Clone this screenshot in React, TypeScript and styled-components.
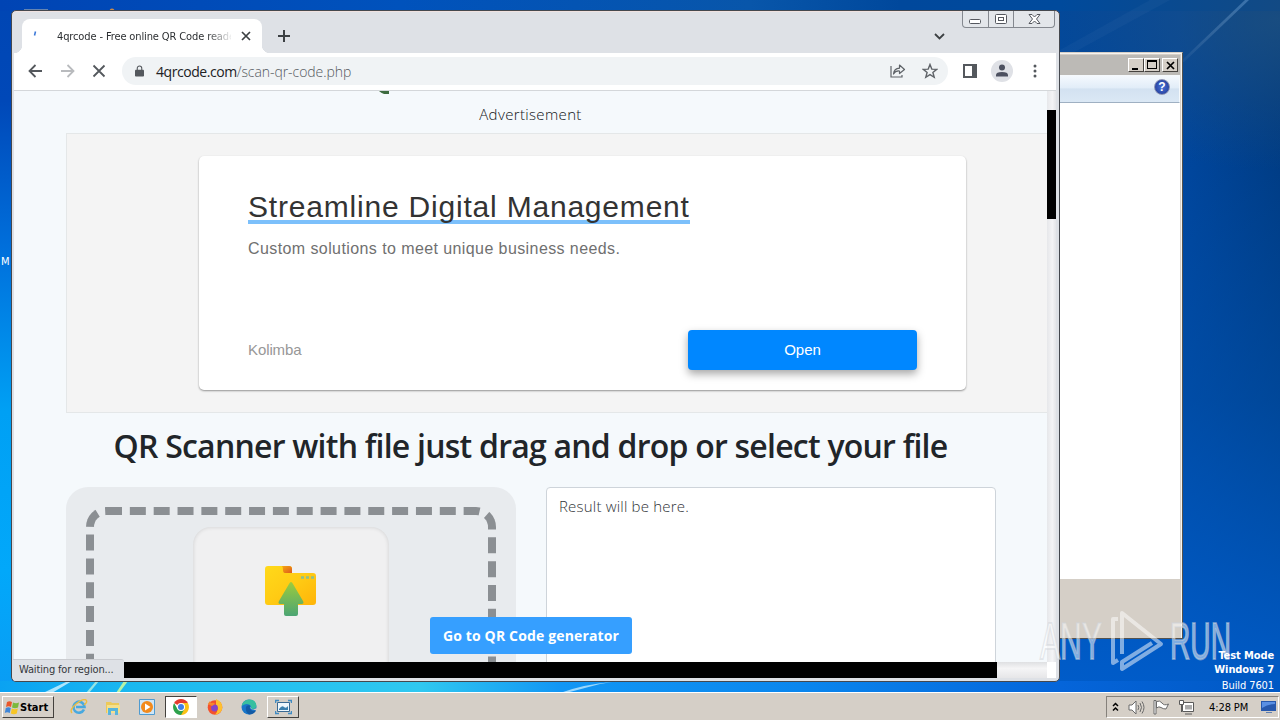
import styled, { createGlobalStyle } from 'styled-components';

const font = {
	ui: '"DejaVu Sans Condensed", "DejaVu Sans", sans-serif',
	page: '"Open Sans", "Noto Sans", sans-serif',
	ad: '"Liberation Sans", Arial, sans-serif',
};

const App = () => {
	return (
		<Desktop>
			<GlobalStyle />
			<Wallpaper />
			<Shortcut>M</Shortcut>
			<Explorer />
			<Browser />
			<Watermark />
			<BuildInfo>
				<b>Test Mode</b>
				<b>Windows 7</b>
				<span>Build 7601</span>
			</BuildInfo>
			<Taskbar />
		</Desktop>
	);
};

export default App;

const Wallpaper = () => (
	<WallpaperSvg viewBox='0 0 1280 720'>
		<defs>
			<linearGradient id='ray' x1='0' y1='1' x2='1' y2='0'>
				<stop offset='0' stopColor='#fff' stopOpacity='.03' />
				<stop offset='1' stopColor='#9fd0ff' stopOpacity='.3' />
			</linearGradient>
		</defs>
		<path d='M1180 62 1245 0h4L1184 62Z' fill='url(#ray)' />
		<path d='M1060 50 1150 0h20L1060 60Z' fill='#fff' opacity='.03' />
		<path d='M43 693 68 681h4L52 693Z' fill='#d5f4ff' opacity='.8' />
		<path d='M86 693 96 681h3L89 693Z' fill='#b8f0e0' opacity='.8' />
		<path d='M116 693 124 681h4L119 693Z' fill='#c8f8a0' opacity='.9' />
		<path d='M560 693Q585 684 612 682L600 684 566 693Z' fill='#d5f4ff' opacity='.7' />
		<path d='M24 9h24v2H24Z' fill='#8fa0b0' opacity='.7' />
		<circle cx='112' cy='11' r='2.5' fill='#c98a4a' />
	</WallpaperSvg>
);

const Explorer = () => (
	<ExplorerWindow>
		<ExplorerTitle>
			<ClassicButton>
				<svg width='10' height='10'>
					<path d='M1 8h6v2H1Z' />
				</svg>
			</ClassicButton>
			<ClassicButton>
				<svg width='10' height='10'>
					<path d='M0 0h10v9H0ZM1 2v6h8V2Z' fillRule='evenodd' />
				</svg>
			</ClassicButton>
			<ClassicButton $gap>
				<svg width='9' height='9' stroke='#000' strokeWidth='1.7'>
					<path d='m1 1 7 7M8 1 1 8' />
				</svg>
			</ClassicButton>
		</ExplorerTitle>
		<ExplorerToolbar>
			<HelpBadge>?</HelpBadge>
		</ExplorerToolbar>
		<ExplorerBody />
	</ExplorerWindow>
);

const Browser = () => (
	<BrowserWindow>
		<TabStrip>
			<Tab>
				<svg width='16' height='16'>
					<path d='M6.500 7.500 7.500 3.500' stroke='#3b78d8' strokeWidth='1.6' fill='none' />
				</svg>
				<TabTitle>4qrcode - Free online QR Code reader</TabTitle>
				<svg width='10' height='10' stroke='#3c4043' strokeWidth='1.7'>
					<path d='m1 1 8 8M9 1 1 9' />
				</svg>
			</Tab>
			<NewTab width='12' height='12'>
				<path d='M6 0v12M0 6h12' stroke='#3c4043' strokeWidth='2' />
			</NewTab>
			<TabSearch width='11' height='7'>
				<path d='m1 1 4.500 4.500L10 1' stroke='#3c4043' strokeWidth='1.8' fill='none' />
			</TabSearch>
			<WindowControls>
				<Control $width={25}>
					<svg width='13' height='16' fill='#fff' stroke='#55585f'>
						<rect x='.5' y='8.500' width='11' height='4' rx='1' />
					</svg>
				</Control>
				<Control $width={25}>
					<svg width='13' height='16' fill='#fff' stroke='#55585f'>
						<rect x='.5' y='3.500' width='11' height='9' rx='1' />
						<rect x='3.500' y='6.500' width='5' height='3' />
					</svg>
				</Control>
				<Control $width={41}>
					<svg width='13' height='16' fill='#fff' stroke='#55585f'>
						<path d='M1 3.500h3L6.500 6 9 3.500h3L8.500 8l3.500 4.500H9L6.500 10 4 12.500H1L4.500 8Z' />
					</svg>
				</Control>
			</WindowControls>
		</TabStrip>

		<Toolbar>
			<NavIcons width='96' height='16' fill='none' strokeWidth='1.8'>
				<path d='M16 8H4M9.500 2 3.500 8 9.500 14' stroke='#54585d' />
				<path d='M35 8h12M41.500 2 47.500 8 41.500 14' stroke='#b9bbbe' />
				<path d='m67.500 2.500 11 11M78.500 2.500l-11 11' stroke='#54585d' />
			</NavIcons>
			<Omnibox>
				<svg width='9' height='12' viewBox='0 0 10 12'>
					<path d='M1 4.500h8q1 0 1 1V11q0 1-1 1H1q-1 0-1-1V5.500q0-1 1-1Z' fill='#54585d' />
					<path d='M2.500 5V3a2.500 2.500 0 0 1 5 0v2' stroke='#54585d' strokeWidth='1.2' fill='none' />
				</svg>
				<Url>
					<b>4qrcode.com</b>/scan-qr-code.php
				</Url>
				<svg width='16' height='14' fill='none' stroke='#5f6368' strokeWidth='1.2'>
					<path d='M1 2v11h11v-2' />
					<path d='M3.500 10Q4 4.500 9.500 4.200V1L14.500 5.500 9.500 9.500V7Q5.500 6.500 3.500 10Z' strokeLinejoin='round' />
				</svg>
				<Star width='16' height='16' viewBox='0 0 16 16' fill='none' stroke='#5f6368' strokeWidth='1.4'>
					<path d='m8 1.500 1.800 4.600 4.900.3-3.800 3.100 1.300 4.800L8 11.600l-4.200 2.700 1.300-4.800L1.300 6.400l4.900-.3Z' />
				</Star>
			</Omnibox>
			<SidePanel width='14' height='14'>
				<path d='M0 0h14v14H0ZM2 2v10h7V2Z' fill='#54585d' fillRule='evenodd' />
			</SidePanel>
			<Avatar>
				<svg width='14' height='14' fill='#4d5160'>
					<circle cx='7' cy='3.500' r='3' />
					<path d='M1 12.500V11q0-3 6-3t6 3v1.500Z' />
				</svg>
			</Avatar>
			<svg width='4' height='14' fill='#54585d'>
				<circle cx='2' cy='2' r='1.500' />
				<circle cx='2' cy='7' r='1.500' />
				<circle cx='2' cy='12' r='1.500' />
			</svg>
		</Toolbar>

		<Viewport>
			<Page>
				<LogoTip width='12' height='3'>
					<path d='M0 0h10v3H5Q2 2 0 0Z' fill='#3d6b3f' />
				</LogoTip>
				<AdLabel>Advertisement</AdLabel>
				<AdSlot>
					<AdCard>
						<AdTitle>Streamline Digital Management</AdTitle>
						<AdText>Custom solutions to meet unique business needs.</AdText>
						<AdFooter>
							<Advertiser>Kolimba</Advertiser>
							<AdButton>Open</AdButton>
						</AdFooter>
					</AdCard>
				</AdSlot>
				<Heading>QR Scanner with file just drag and drop or select your file</Heading>
				<Columns>
					<DropPanel>
						<DropZone>
							<UploadTile>
								<FolderIcon />
							</UploadTile>
						</DropZone>
					</DropPanel>
					<ResultBox>Result will be here.</ResultBox>
				</Columns>
			</Page>
			<VerticalTrack>
				<VerticalThumb />
			</VerticalTrack>
		</Viewport>
		<BottomTrack>
			<BottomThumb />
		</BottomTrack>
		<GeneratorButton>Go to QR Code generator</GeneratorButton>
		<StatusBubble>Waiting for region...</StatusBubble>
	</BrowserWindow>
);

const FolderIcon = () => (
	<svg width='52' height='51' viewBox='0 0 52 51'>
		<defs>
			<linearGradient id='folder' x1='0' y1='0' x2='1' y2='1'>
				<stop offset='0' stopColor='#ffd91a' />
				<stop offset='.5' stopColor='#ffcb14' />
				<stop offset='1' stopColor='#ffb409' />
			</linearGradient>
			<linearGradient id='arrow' x1='0' y1='0' x2='0' y2='1'>
				<stop offset='0' stopColor='#9ccc3c' />
				<stop offset='1' stopColor='#4ca574' />
			</linearGradient>
			<linearGradient id='fold' x1='0' y1='0' x2='1' y2='1'>
				<stop offset='0' stopColor='#f6a712' />
				<stop offset='1' stopColor='#dc5a1c' />
			</linearGradient>
		</defs>
		<path d='M3 0h21q3 0 3 3v4h21q3 0 3 3v26q0 3-3 3H3q-3 0-3-3V3q0-3 3-3Z' fill='url(#folder)' />
		<path d='M17 0h7q3 0 3 3v4h-7q-2 0-2-3Q18 1 17 0Z' fill='url(#fold)' />
		<path d='M36 11.500h3M41 11.500h3M46 11.500h3' stroke='#8fc08a' strokeWidth='2.400' />
		<path d='M26 16q1 0 2 2l10 17q1.500 3-1.500 3h-3.500v10q0 2-2 2H21q-2 0-2-2V38h-3.500q-3 0-1.500-3L24 18q1-2 2-2Z' fill='url(#arrow)' />
	</svg>
);

const Watermark = () => (
	<WatermarkSvg width='200' height='70' fill='none' stroke='#fff' strokeOpacity='.5' strokeWidth='4'>
		<g fill='#fff' fillOpacity='.5' stroke='#d0d4d9' strokeOpacity='.5' strokeWidth='1.800' fontFamily='"Liberation Sans"' fontSize='51'>
			<text x='4' y='54' textLength='62' lengthAdjust='spacingAndGlyphs'>
				ANY
			</text>
			<text x='134' y='54' textLength='61' lengthAdjust='spacingAndGlyphs'>
				RUN
			</text>
		</g>
		<path d='M86 49V8L125 39 86 64V57L116 38' strokeLinejoin='round' />
		<path d='M82 14h-5V58l5-3' strokeLinejoin='round' />
	</WatermarkSvg>
);

const Taskbar = () => (
	<Bar>
		<StartButton>
			<svg width='16' height='15' viewBox='0 0 16 15'>
				<path d='M3 2Q5.500.5 8 2L7 7Q4.500 5.500 2 7Z' fill='#e9562a' />
				<path d='M9 2.500Q12 4 15 2.500L14 7.500Q11 9 8 7.500Z' fill='#7cb93c' />
				<path d='M1.800 8Q4.500 6.500 6.800 8L5.800 13Q3 11.500.8 13Z' fill='#3f86d8' />
				<path d='M7.800 8.500Q10.800 10 13.800 8.500L12.800 13.500Q9.800 15 6.800 13.500Z' fill='#f7c524' />
			</svg>
			Start
		</StartButton>
		<Launcher $left={9}>
			<svg width='18' height='16' viewBox='0 0 18 16' fill='none'>
				<path d='M14 10.500A5.500 5.500 0 1 1 14.500 8H6' stroke='#48a9df' strokeWidth='2.600' />
				<path d='M2 14Q-1 11 6 5T16 1Q18 3 14 6' stroke='#eebd3b' strokeWidth='1.400' />
			</svg>
		</Launcher>
		<Launcher>
			<svg width='16' height='15' viewBox='0 0 16 15'>
				<path d='M1 2h5l1 1h7v10H1Z' fill='#ecc95a' />
				<path d='M2 5h13v8H2Z' fill='#f5e08c' />
				<path d='M3 15V8h10v7h-3v-4H6v4Z' fill='#58b5dc' />
			</svg>
		</Launcher>
		<Launcher>
			<svg width='16' height='16'>
				<path d='M.5.5h15v15H.5Z' fill='#cfe6f7' stroke='#4f9bd0' />
				<circle cx='8' cy='8' r='6' fill='#f28a1c' />
				<path d='M6 4.500 11.500 8 6 11.500Z' fill='#fff' />
			</svg>
		</Launcher>
		<Launcher $state='active'>
			<svg width='16' height='16' viewBox='0 0 16 16'>
				<path d='M8 8 1.100 4A8 8 0 0 1 14.900 4Z' fill='#e33b2e' />
				<path d='M8 8V4h6.900A8 8 0 0 1 8 16Z' fill='#fbc116' />
				<path d='M8 8 4.500 10 1.100 4A8 8 0 0 0 8 16l3.500-6Z' fill='#2da14c' />
				<circle cx='8' cy='8' r='4' fill='#fff' />
				<circle cx='8' cy='8' r='3' fill='#3f7fe8' />
			</svg>
		</Launcher>
		<Launcher>
			<svg width='16' height='16' viewBox='0 0 16 16'>
				<circle cx='8' cy='8.500' r='7.300' fill='#f4512c' />
				<path d='M9 0q7 3 6.300 9.500Q14 15 8 15.800 13 10 9 6Z' fill='#ffc02e' />
				<circle cx='7.500' cy='9' r='3.400' fill='#8446c9' />
				<path d='M.8 5 3 2l1 2q3-1 4 1L5 7Z' fill='#f8862c' />
			</svg>
		</Launcher>
		<Launcher>
			<svg width='16' height='16' viewBox='0 0 16 16'>
				<circle cx='8' cy='8' r='7.500' fill='#1976c9' />
				<path d='M.6 7Q2 .5 8.500.5T15.500 7Q15 10.500 10 10q1-3-2-4.500T.6 7Z' fill='#38bfa0' />
				<path d='M5 8q1-2.500 4-1.500Q8 9 10 11q2 1.500 5 .5-2 4-7 4Q4 13 5 8Z' fill='#125aa5' />
				<path d='M9 7.500q0 3 5 3.500h1.500V9q-3 2-5 .8Z' fill='#d4cec6' />
			</svg>
		</Launcher>
		<Launcher $state='raised'>
			<svg width='17' height='16' viewBox='0 0 17 16'>
				<path d='M2.500 3.500h12v9h-12Z' fill='#eef7fd' stroke='#3a6a94' />
				<path d='M4 10q3-4 5-2t4-1v4H4Z' fill='#3b7fae' />
				<path d='M.5 4V1.500H4M13 1.500h3.500V4M.5 12v2.500H4M13 14.500h3.500V12' stroke='#3f8ac2' fill='none' strokeWidth='1.500' />
			</svg>
		</Launcher>
		<Tray>
			<svg width='8' height='10' fill='none' stroke='#000' strokeWidth='1.500'>
				<path d='M1 4 3.500 1.500 6 4M1 8.500 3.500 6 6 8.500' />
			</svg>
			<svg width='17' height='15' fill='#fff' stroke='#6a6a6a'>
				<path d='M1 5h3l4-4v13L4 10H1Z' />
				<path d='M10 5q1.500 2.500 0 5M12 3q3 4.500 0 9M14 1.500q4 6 0 12' fill='none' />
			</svg>
			<svg width='17' height='16' fill='#fff' stroke='#6a6a6a'>
				<path d='M1 1.500h2V15H1ZM3.500 2.500Q7 1 9 4t6.500 1L13 10Q10 10 8 8.500T3.500 9Z' />
			</svg>
			<svg width='17' height='16' fill='#fff' stroke='#5a5a5a'>
				<path d='M4.500 3.500h11v9h-11ZM7 15h7' />
				<path d='M7 6h7v4.500H7Z' fill='#aaa' stroke='none' />
				<path d='M1.500 1.500h4v4h-4ZM3.500 5.500V13' />
			</svg>
			<Clock>4:28 PM</Clock>
			<svg width='16' height='14'>
				<path d='M0 1h15v10H0Z' fill='#2859ad' />
				<path d='M1 2h13v2Q7 4 1 8Z' fill='#5b90e3' />
				<path d='M5 12h6v1H5Z' fill='#5f7fb0' />
			</svg>
		</Tray>
	</Bar>
);

const GlobalStyle = createGlobalStyle`
	* {
		box-sizing: border-box;
	}

	body {
		margin: 0;
		overflow: hidden;
	}

	svg {
		display: block;
		flex: none;
	}
`;

const Desktop = styled.div`
	position: relative;
	display: flex;
	flex-direction: column;
	justify-content: flex-end;
	width: 1280px;
	height: 720px;
	overflow: hidden;
	white-space: nowrap;
	font-family: ${font.ui};
	background:
		linear-gradient(90deg, #0aa2f2 0, #1ab8f0 130px, #30c8f0 420px, #1296f4 560px, #0a86ee 800px, #0565da 1060px, #0058c4 1280px)
			0 681px / 100% 12px no-repeat,
		linear-gradient(180deg, #0046b4 0, #0048b8 90px, #0070dc 240px, #00a0f4 400px, #02a8fa 560px, #0a9cf4 681px) 0 11px / 12px 670px
			no-repeat,
		linear-gradient(90deg, #0044b4 0, #0052bc 400px, #0856aa 750px, #00489c 900px, #004a9c 1060px, #124a84 1280px) 0 0 / 100%
			11px no-repeat,
		radial-gradient(260px 150px at 1280px 20px, rgba(35, 84, 128, 0.7), transparent),
		linear-gradient(180deg, transparent 100px, rgba(0, 84, 178, 0.5) 400px, rgba(0, 96, 210, 0.85) 690px),
		linear-gradient(90deg, #00479c 1059px, #00459c 1180px, #003a80 1280px);
`;

const WallpaperSvg = styled.svg`
	position: absolute;
	inset: 0;
`;

const Shortcut = styled.span`
	position: absolute;
	left: 1px;
	top: 255px;
	color: #fff;
	font-size: 11px;
`;

const ExplorerWindow = styled.section`
	position: absolute;
	left: 1040px;
	top: 52px;
	width: 143px;
	height: 587px;
	padding: 2px;
	display: flex;
	flex-direction: column;
	background: #d5cfc7;
	border: 1px solid #55524d;
	border-top-color: #d5cfc7;
	box-shadow: inset -1px 1px #f6f4f0;
`;

const ExplorerTitle = styled.header`
	height: 20px;
	display: flex;
	align-items: center;
	justify-content: flex-end;
	padding-right: 2px;
	background: #bcbab6;
`;

const ClassicButton = styled.span<{ $gap?: boolean }>`
	width: 16px;
	height: 14px;
	margin-left: ${({ $gap }) => ($gap ? 2 : 0)}px;
	display: flex;
	align-items: center;
	justify-content: center;
	background: #d5cfc7;
	border: 1px solid;
	border-color: #fff #45423e #45423e #fff;
`;

const ExplorerToolbar = styled.div`
	height: 28px;
	display: flex;
	align-items: flex-start;
	justify-content: flex-end;
	padding: 3px 9px 0;
	background: linear-gradient(#f4f9fe, #e2edf8 45%, #d3e2f1 50%, #dbe8f5);
	border: 1px solid #f5f9fc;
	border-bottom-color: #9fb0c2;
`;

const HelpBadge = styled.span`
	width: 16px;
	height: 16px;
	border: 1px solid #8c93b4;
	border-radius: 50%;
	background: radial-gradient(#4a72d8, #1d3590);
	color: #fff;
	font: bold 12px/14px ${font.ad};
	text-align: center;
`;

const ExplorerBody = styled.div`
	height: 476px;
	background: #fff;
`;

const BrowserWindow = styled.main`
	position: absolute;
	left: 11px;
	top: 10px;
	width: 1049px;
	height: 672px;
	padding: 0 3px 3px 2px;
	display: flex;
	flex-direction: column;
	background: #dee1e6;
	border: 1px solid #45484e;
	border-radius: 5px;
	box-shadow: inset 0 1px #f0e2e0;
	overflow: hidden;
`;

const TabStrip = styled.header`
	height: 42px;
	display: flex;
	align-items: center;
`;

const Tab = styled.div`
	position: relative;
	align-self: flex-end;
	width: 240px;
	height: 34px;
	margin-left: 8px;
	padding: 0 11px 0 6px;
	display: flex;
	align-items: center;
	background: #fff;
	border-radius: 8px 8px 0 0;

	&::before,
	&::after {
		content: '';
		position: absolute;
		bottom: 0;
		width: 8px;
		height: 8px;
	}

	&::before {
		left: -8px;
		background: radial-gradient(circle at 0 0, transparent 8px, #fff 8.5px);
	}

	&::after {
		right: -8px;
		background: radial-gradient(circle at 100% 0, transparent 8px, #fff 8.5px);
	}
`;

const TabTitle = styled.span`
	flex: 1;
	margin: 0 10px 0 13px;
	overflow: hidden;
	color: #2c2f32;
	font-size: 11px;
	letter-spacing: -0.12px;
	mask-image: linear-gradient(90deg, #000 150px, transparent 176px);
`;

const NewTab = styled.svg`
	margin: 8px 0 0 16px;
`;

const TabSearch = styled.svg`
	margin: 8px 17px 0 auto;
`;

const WindowControls = styled.div`
	align-self: flex-start;
	display: flex;
	height: 17px;
	margin-right: 1px;
	border: 1px solid #84888f;
	border-top: none;
	border-radius: 0 0 4px 4px;
	background: #e3e6ea;
`;

const Control = styled.span<{ $width: number }>`
	width: ${({ $width }) => $width}px;
	display: flex;
	justify-content: center;

	& + & {
		border-left: 1px solid #84888f;
	}
`;

const Toolbar = styled.div`
	height: 38px;
	display: flex;
	align-items: center;
	padding: 0 19px 2px 12px;
	background: #fff;
	border-bottom: 1px solid #d4d7da;
`;

const NavIcons = styled.svg`
	margin-top: 1px;
`;

const Omnibox = styled.div`
	flex: 1;
	height: 28px;
	display: flex;
	align-items: center;
	padding: 0 10px 0 13px;
	background: #f0f3f5;
	border-radius: 14px;
`;

const Url = styled.span`
	flex: 1;
	margin: 2px 0 0 12px;
	color: #55595e;
	font: 300 14px ${font.page};
	letter-spacing: -0.06px;

	b {
		color: #202124;
		font-weight: 400;
		letter-spacing: -0.45px;
	}
`;

const Star = styled.svg`
	margin-left: 16px;
`;

const SidePanel = styled.svg`
	margin-left: 15px;
`;

const Avatar = styled.span`
	width: 22px;
	height: 22px;
	margin: 0 20px 0 14px;
	display: flex;
	align-items: center;
	justify-content: center;
	background: #dfe1e6;
	border-radius: 50%;
`;

const Viewport = styled.div`
	flex: 1;
	min-height: 0;
	display: flex;
`;

const Page = styled.div`
	width: 1033px;
	display: flex;
	flex-direction: column;
	overflow: hidden;
	background: #f5f9fc;
	font-family: ${font.page};
`;

const LogoTip = styled.svg`
	margin-left: 365px;
`;

const AdLabel = styled.p`
	flex: none;
	height: 39px;
	margin: 0;
	padding-top: 8px;
	color: #101418;
	font-size: 15px;
	font-weight: 300;
	line-height: 24px;
	letter-spacing: 0.35px;
	text-align: center;
`;

const AdSlot = styled.div`
	flex: none;
	height: 280px;
	margin-left: 52px;
	padding: 22px 0 0 132px;
	background: #f4f4f4;
	border: 1px solid #e4e7e8;
	border-right: none;
`;

const AdCard = styled.article`
	width: 767px;
	height: 234px;
	padding: 32px 49px 20px;
	display: flex;
	flex-direction: column;
	align-items: flex-start;
	background: #fff;
	border-radius: 5px;
	box-shadow: 0 1px 2px rgba(0, 0, 0, 0.4);
	font-family: ${font.ad};
`;

const AdTitle = styled.h2`
	height: 36px;
	margin: 0;
	color: #333;
	font-size: 30px;
	font-weight: 400;
	line-height: 38px;
	letter-spacing: 0.8px;
	background: linear-gradient(#7cc0fb, #7cc0fb) 0 100% / 100% 4px no-repeat;
`;

const AdText = styled.p`
	margin: 15px 0 0;
	color: #707070;
	font-size: 16px;
	line-height: 20px;
	letter-spacing: 0.41px;
`;

const AdFooter = styled.footer`
	width: 100%;
	margin-top: auto;
	display: flex;
	align-items: center;
	justify-content: space-between;
	font-size: 15px;
`;

const Advertiser = styled.span`
	margin-bottom: 2px;
	color: #979797;
	letter-spacing: -0.1px;
`;

const AdButton = styled.span`
	width: 229px;
	height: 40px;
	color: #fff;
	line-height: 40px;
	text-align: center;
	background: #0087ff;
	border-radius: 4px;
	box-shadow: 0 4px 9px rgba(0, 0, 0, 0.35);
`;

const Heading = styled.h1`
	flex: none;
	height: 74px;
	margin: 0;
	color: #212529;
	font-size: 32px;
	font-weight: 600;
	line-height: 66px;
	letter-spacing: -0.77px;
	text-align: center;
`;

const Columns = styled.div`
	display: flex;
	gap: 30px;
	margin-left: 52px;
`;

const DropPanel = styled.div`
	width: 450px;
	height: 340px;
	padding: 20px;
	background: #e8ebee;
	border-radius: 22px;
`;

const DropZone = styled.div`
	height: 300px;
	padding-top: 12px;
	border: 8px dashed #8b8f93;
	border-radius: 20px;
`;

const UploadTile = styled.div`
	width: 196px;
	height: 196px;
	margin: 0 auto;
	padding: 39px 0 0 72px;
	background: #f0f0f1;
	border-radius: 18px;
	box-shadow: inset 0 0 4px rgba(0, 0, 0, 0.14);
`;

const ResultBox = styled.div`
	width: 450px;
	padding: 6px 12px;
	color: #303438;
	font-size: 15px;
	font-weight: 300;
	line-height: 24px;
	letter-spacing: 0.2px;
	background: #fff;
	border: 1px solid #ced4da;
	border-radius: 4px;
`;

const VerticalTrack = styled.div`
	width: 9px;
	padding-top: 19px;
	background: linear-gradient(90deg, #e6e7ea, #f4f4f6 60%, #e4e5e8);
`;

const VerticalThumb = styled.div`
	height: 109px;
	background: #000;
`;

const BottomTrack = styled.div`
	height: 16px;
	padding: 0 9px 0 110px;
	background: linear-gradient(90deg, transparent 1033px, #fff 1033px), linear-gradient(#dfe0e2, #f5f5f6 40%, #e6e6e8);
`;

const BottomThumb = styled.div`
	width: 873px;
	height: 16px;
	background: #000;
`;

const GeneratorButton = styled.a`
	position: absolute;
	left: 418px;
	top: 606px;
	width: 202px;
	height: 37px;
	color: #fff;
	font: 700 14px/37px ${font.page};
	letter-spacing: 0.15px;
	text-align: center;
	background: #369fff;
	border-radius: 3px;
`;

const StatusBubble = styled.div`
	position: absolute;
	left: 1px;
	bottom: 0;
	width: 111px;
	height: 22px;
	padding-left: 6px;
	color: #34373b;
	font-size: 11px;
	line-height: 20px;
	letter-spacing: -0.15px;
	background: #dee1e6;
	border-top: 1px solid #cbcdd1;
	border-radius: 0 3px 0 0;
`;

const WatermarkSvg = styled.svg`
	position: absolute;
	left: 1036px;
	top: 605px;
`;

const BuildInfo = styled.div`
	position: absolute;
	right: 6px;
	top: 649px;
	display: flex;
	flex-direction: column;
	align-items: flex-end;
	color: #fff;
	font-size: 11px;
	line-height: 14px;
	letter-spacing: -0.1px;

	span {
		margin-top: 2px;
	}
`;

const Bar = styled.footer`
	position: relative;
	height: 28px;
	display: flex;
	align-items: center;
	padding: 1px 1px 0 2px;
	background: #d5cfc7;
	border-top: 1px solid #fff;
`;

const StartButton = styled.div`
	width: 52px;
	height: 22px;
	display: flex;
	align-items: center;
	padding-left: 1px;
	color: #000;
	font-size: 11px;
	font-weight: 700;
	border: 1px solid;
	border-color: #fff #44413d #44413d #fff;
`;

const Launcher = styled.div<{ $left?: number; $state?: 'active' | 'raised' }>`
	width: 32px;
	height: 22px;
	margin-left: ${({ $left = 2 }) => $left}px;
	display: flex;
	align-items: center;
	justify-content: center;
	background: ${({ $state }) => ($state === 'active' ? '#fff' : 'none')};
	border: 1px solid;
	border-color: ${({ $state }) => {
		if ($state === 'active') return '#44413d #fff #fff #44413d';
		if ($state === 'raised') return '#fff #44413d #44413d #fff';
		return 'transparent';
	}};
`;

const Tray = styled.div`
	width: 173px;
	height: 22px;
	margin-left: auto;
	padding: 0 0 0 5px;
	display: flex;
	align-items: center;
	gap: 8px;
	border: 1px solid;
	border-color: #85817b #fff #fff #85817b;
`;

const Clock = styled.time`
	width: 42px;
	margin: 0 2px 0 6px;
	color: #000;
	font-size: 11px;
	letter-spacing: -0.1px;
`;
